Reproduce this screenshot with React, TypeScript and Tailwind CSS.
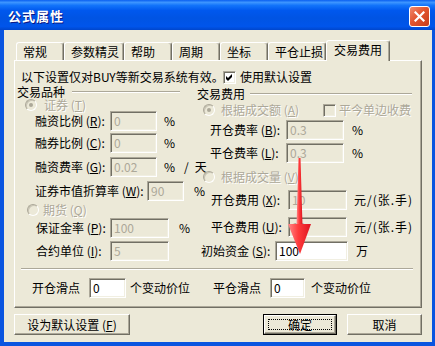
import React from "react";

const F = "font-['Noto_Sans_CJK_SC','Noto_Sans',sans-serif]";

function Field({
  className,
  value,
  white,
}: {
  className: string;
  value: string;
  white?: boolean;
}) {
  return (
    <div
      className={`h-[20px] shrink-0 border border-t-[#ACA899] border-l-[#ACA899] border-b-white border-r-white shadow-[inset_1px_1px_0_#716F64,inset_-1px_-1px_0_#F1EFE2] flex items-center pl-[3px] ${
        white ? "bg-white text-black" : "bg-[#ECE9D8] text-[#ACA899]"
      } ${className}`}
    >
      <span className="leading-none">{value}</span>
    </div>
  );
}

function Radio({ checked }: { checked?: boolean }) {
  return (
    <div className="w-[12px] h-[12px] shrink-0 rounded-full border border-t-[#ACA899] border-l-[#ACA899] border-b-white border-r-white bg-[#ECE9D8] shadow-[inset_1px_1px_0_#C9C5B5] flex items-center justify-center">
      {checked && <div className="w-[4px] h-[4px] rounded-full bg-[#ACA899]" />}
    </div>
  );
}

function Check({ checked, disabled }: { checked?: boolean; disabled?: boolean }) {
  return (
    <div
      className={`w-[13px] h-[13px] shrink-0 border border-t-[#ACA899] border-l-[#ACA899] border-b-white border-r-white shadow-[inset_1px_1px_0_#716F64,inset_-1px_-1px_0_#F1EFE2] flex items-center justify-center ${
        disabled ? "bg-[#ECE9D8]" : "bg-white"
      }`}
    >
      {checked && (
        <svg width="7" height="7" viewBox="0 0 7 7">
          <path d="M0 2 L2 4 L6 0 V3 L2 7 L0 5 Z" fill="#000" />
        </svg>
      )}
    </div>
  );
}

function Etched({ className }: { className: string }) {
  return (
    <div
      className={`h-[2px] border-t border-b border-t-[#ACA899] border-b-white ${className}`}
    />
  );
}

function Tab({ className, label }: { className: string; label: string }) {
  return (
    <div
      className={`h-[18px] shrink-0 border-t border-l border-r border-t-white border-l-white border-r-[#716F64] shadow-[inset_-1px_0_0_#ACA899] rounded-t-[3px] flex items-center pl-[6px] ${className}`}
    >
      <span className="leading-none">{label}</span>
    </div>
  );
}

function Btn({
  className,
  children,
  def,
}: {
  className: string;
  children: React.ReactNode;
  def?: boolean;
}) {
  if (def) {
    return (
      <div className={`h-[21px] border border-black ${className}`}>
        <div className="w-full h-full border-t border-l border-r border-b border-t-white border-l-white border-r-[#716F64] border-b-[#716F64] shadow-[inset_-1px_-1px_0_#ACA899] p-[3px]">
          <div className="w-full h-full border border-dotted border-black flex items-center justify-center leading-none">
            {children}
          </div>
        </div>
      </div>
    );
  }
  return (
    <div
      className={`h-[21px] border-t border-l border-r border-b border-t-white border-l-white border-r-[#716F64] border-b-[#716F64] shadow-[inset_-1px_-1px_0_#ACA899] flex items-center justify-center leading-none ${className}`}
    >
      {children}
    </div>
  );
}

const DIS = "leading-none whitespace-nowrap text-[#ACA899] [text-shadow:1px_1px_0_#fff]";

export default function App() {
  return (
    <div
      className={`w-[435px] h-[346px] flex flex-col bg-[#0A55E0] ${F} text-[12px] text-black relative overflow-hidden`}
    >
      {/* title bar */}
      <div className="h-[30px] shrink-0 flex items-center pl-[8px] pr-[5px] bg-[linear-gradient(to_bottom,#0A5FF0_0%,#3D95FF_8%,#1274FA_18%,#0058EE_35%,#0054E3_60%,#0055EB_88%,#0046CC_100%)]">
        <span className="text-white font-bold text-[13px] tracking-[1px] leading-none [text-shadow:1px_1px_0_#0A1883]">
          公式属性
        </span>
        <div className="ml-auto mt-[2px] w-[21px] h-[21px] rounded-[3px] border border-white bg-[linear-gradient(135deg,#F08A6E_0%,#E2552F_45%,#C63B1A_100%)] flex items-center justify-center">
          <svg width="11" height="11" viewBox="0 0 11 11">
            <path d="M1.5 1.5 L9.5 9.5 M9.5 1.5 L1.5 9.5" stroke="#fff" strokeWidth="2.2" strokeLinecap="square" />
          </svg>
        </div>
      </div>

      {/* client */}
      <div className="flex-1 ml-[4px] mr-[3px] mb-[4px] bg-[#ECE9D8] flex flex-col">
        {/* tabs */}
        <div className="mt-[10px] ml-[12px] h-[20px] flex items-end">
          <Tab className="w-[48px]" label="常规" />
          <Tab className="w-[60px]" label="参数精灵" />
          <Tab className="w-[48px]" label="帮助" />
          <Tab className="w-[48px]" label="周期" />
          <Tab className="w-[48px]" label="坐标" />
          <Tab className="w-[58px]" label="平仓止损" />
          <div className="relative z-10 -mb-px w-[64px] h-[21px] shrink-0 bg-[#ECE9D8] border-t border-l border-r border-t-white border-l-white border-r-[#716F64] shadow-[inset_-1px_0_0_#ACA899] rounded-t-[3px] flex items-start pt-[3px] pl-[7px]">
            <span className="leading-none">交易费用</span>
          </div>
        </div>

        {/* panel */}
        <div className="ml-[10px] w-[408px] h-[248px] shrink-0 border-t border-l border-r border-b border-t-white border-l-white border-r-[#716F64] border-b-[#716F64] shadow-[inset_-1px_-1px_0_#ACA899] flex flex-col">
          <div className="mt-[8px] h-[16px] flex items-center pl-[6px]">
            <span className="w-[202px] shrink-0 leading-none whitespace-nowrap">
              以下设置仅对BUY等新交易系统有效。
            </span>
            <Check checked />
            <span className="ml-[4px] leading-none">使用默认设置</span>
          </div>

          <div className="flex">
            {/* left column */}
            <div className="w-[180px] shrink-0 flex flex-col">
              <div className="h-[13px] flex items-center pl-[2px]">
                <span className="leading-none">交易品种</span>
                <Etched className="ml-[7px] w-[108px]" />
              </div>
              <div className="mt-[1px] h-[12px] flex items-center pl-[10px]">
                <Radio checked />
                <span className={`ml-[7px] ${DIS}`}>
                  证券 (<u>T</u>)
                </span>
              </div>
              <div className="h-[20px] flex items-center pl-[20px]">
                <span className="w-[75px] shrink-0 leading-none whitespace-nowrap">
                  融资比例 (<u>R</u>):
                </span>
                <Field className="w-[47px]" value="0" />
                <span className="ml-[7px] leading-none">%</span>
              </div>
              <div className="mt-[2px] h-[20px] flex items-center pl-[20px]">
                <span className="w-[75px] shrink-0 leading-none whitespace-nowrap">
                  融券比例 (<u>C</u>):
                </span>
                <Field className="w-[47px]" value="0" />
                <span className="ml-[7px] leading-none">%</span>
              </div>
              <div className="mt-[4px] h-[20px] flex items-center pl-[20px]">
                <span className="w-[75px] shrink-0 leading-none whitespace-nowrap">
                  融资费率 (<u>G</u>):
                </span>
                <Field className="w-[47px]" value="0.02" />
                <span className="ml-[7px] leading-none">%</span>
                <span className="ml-[9px] leading-none">/</span>
                <span className="ml-[6px] leading-none">天</span>
              </div>
              <div className="mt-[4px] h-[20px] flex items-center pl-[20px]">
                <span className="w-[112px] shrink-0 leading-none whitespace-nowrap">
                  证券市值折算率 (<u>W</u>):
                </span>
                <Field className="w-[37px]" value="90" />
                <span className="ml-[10px] leading-none">%</span>
              </div>
              <div className="mt-[2px] h-[14px] flex items-center pl-[12px]">
                <Radio />
                <span className={`ml-[4px] ${DIS}`}>
                  期货 (<u>Q</u>)
                </span>
              </div>
              <div className="mt-[1px] h-[20px] flex items-center pl-[21px]">
                <span className="w-[74px] shrink-0 leading-none whitespace-nowrap">
                  保证金率 (<u>P</u>):
                </span>
                <Field className="w-[59px]" value="100" />
                <span className="ml-[10px] leading-none">%</span>
              </div>
              <div className="mt-[3px] h-[20px] flex items-center pl-[21px]">
                <span className="w-[74px] shrink-0 leading-none whitespace-nowrap">
                  合约单位 (<u>I</u>):
                </span>
                <Field className="w-[59px]" value="5" />
              </div>
            </div>

            {/* right column */}
            <div className="flex-1 flex flex-col">
              <div className="mt-[2px] h-[14px] flex items-center pl-[2px]">
                <span className="leading-none">交易费用</span>
                <Etched className="ml-[5px] w-[162px]" />
              </div>
              <div className="mt-[2px] h-[14px] flex items-center pl-[8px]">
                <div className="w-[120px] shrink-0 flex items-center">
                  <Radio checked />
                  <span className={`ml-[6px] ${DIS}`}>
                    根据成交额 (<u>A</u>)
                  </span>
                </div>
                <Check disabled />
                <span className={`ml-[3px] ${DIS}`}>平今单边收费</span>
              </div>
              <div className="mt-[3px] h-[20px] flex items-center pl-[15px]">
                <span className="w-[76px] shrink-0 leading-none whitespace-nowrap">
                  开仓费率 (<u>B</u>):
                </span>
                <Field className="w-[58px]" value="0.3" />
                <span className="ml-[8px] leading-none">%</span>
              </div>
              <div className="mt-[3px] h-[20px] flex items-center pl-[15px]">
                <span className="w-[76px] shrink-0 leading-none whitespace-nowrap">
                  平仓费率 (<u>L</u>):
                </span>
                <Field className="w-[58px]" value="0.3" />
                <span className="ml-[8px] leading-none">%</span>
              </div>
              <div className="mt-[7px] h-[14px] flex items-center pl-[8px]">
                <Radio />
                <span className={`ml-[6px] ${DIS}`}>
                  根据成交量 (<u>V</u>)
                </span>
              </div>
              <div className="mt-[6px] h-[20px] flex items-center pl-[16px]">
                <span className="w-[77px] shrink-0 leading-none whitespace-nowrap">
                  开仓费用 (<u>X</u>):
                </span>
                <Field className="w-[59px]" value="10" />
                <span className="ml-[7px] leading-none whitespace-nowrap tracking-[1px]">元/(张.手)</span>
              </div>
              <div className="mt-[7px] h-[20px] flex items-center pl-[16px]">
                <span className="w-[77px] shrink-0 leading-none whitespace-nowrap">
                  平仓费用 (<u>U</u>):
                </span>
                <Field className="w-[59px]" value="10" />
                <span className="ml-[7px] leading-none whitespace-nowrap tracking-[1px]">元/(张.手)</span>
              </div>
              <div className="mt-[4px] h-[20px] flex items-center pl-[6px]">
                <span className="w-[74px] shrink-0 leading-none whitespace-nowrap">
                  初始资金 (<u>S</u>):
                </span>
                <Field className="w-[73px]" value="100" white />
                <span className="ml-[8px] leading-none">万</span>
              </div>
            </div>
          </div>

          <Etched className="mt-[7px] ml-[6px] w-[392px]" />

          <div className="mt-[8px] h-[20px] flex items-center pl-[17px]">
            <span className="w-[57px] shrink-0 leading-none">开仓滑点</span>
            <Field className="w-[37px]" value="0" white />
            <span className="ml-[4px] w-[60px] shrink-0 leading-none">个变动价位</span>
            <span className="ml-[23px] w-[57px] shrink-0 leading-none">平仓滑点</span>
            <Field className="w-[35px]" value="0" white />
            <span className="ml-[6px] leading-none">个变动价位</span>
          </div>
        </div>

        {/* buttons */}
        <div className="mt-[6px] flex">
          <Btn className="ml-[10px] w-[116px]">
            <span>
              设为默认设置 (<u>F</u>)
            </span>
          </Btn>
          <Btn className="ml-[133px] w-[74px]" def>
            确定
          </Btn>
          <Btn className="ml-[10px] w-[75px]">取消</Btn>
        </div>
      </div>

      {/* red arrow overlay */}
      <svg
        className="absolute left-0 top-0 pointer-events-none"
        width="435"
        height="346"
        viewBox="0 0 435 346"
      >
        <defs>
          <linearGradient id="ar" x1="0" x2="1" y1="0" y2="0">
            <stop offset="0" stopColor="#FF8A8A" />
            <stop offset="0.45" stopColor="#FF3B3B" />
            <stop offset="1" stopColor="#DD1420" />
          </linearGradient>
        </defs>
        <polygon points="298.5,158 300.5,158 302.5,226 296.5,226" fill="url(#ar)" />
        <polygon points="288,224 311,224 300,254" fill="url(#ar)" />
      </svg>
    </div>
  );
}
